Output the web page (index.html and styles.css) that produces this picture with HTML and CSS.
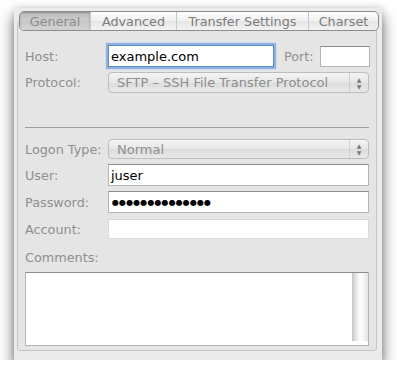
FILE: index.html
```html
<!DOCTYPE html>
<html>
<head>
  <meta charset="UTF-8">
  <title>Site Settings</title>
  <link rel="stylesheet" href="styles.css">
</head>
<body>
  <div class="window">
    <div class="tab-box">
      <div class="tabs">
        <div class="tab selected tab-general">General</div>
        <div class="tab tab-advanced">Advanced</div>
        <div class="tab tab-transfer">Transfer Settings</div>
        <div class="tab tab-charset">Charset</div>
      </div>

      <div class="row row-host">
        <div class="label">Host:</div>
        <div class="field focused host-field">example.com</div>
        <div class="port-label">Port:</div>
        <div class="field port-field"></div>
      </div>

      <div class="row row-protocol">
        <div class="label">Protocol:</div>
        <div class="popup">
          <span class="popup-text">SFTP – SSH File Transfer Protocol</span>
          <span class="popup-arrows"><span>▲</span><span>▼</span></span>
        </div>
      </div>

      <div class="separator"></div>

      <div class="row row-logon">
        <div class="label">Logon Type:</div>
        <div class="popup">
          <span class="popup-text">Normal</span>
          <span class="popup-arrows"><span>▲</span><span>▼</span></span>
        </div>
      </div>

      <div class="row row-input">
        <div class="label">User:</div>
        <div class="field">juser</div>
      </div>

      <div class="row row-input">
        <div class="label">Password:</div>
        <div class="field password">●●●●●●●●●●●●●●</div>
      </div>

      <div class="row row-account">
        <div class="label">Account:</div>
        <div class="field disabled"></div>
      </div>

      <div class="comments-label">Comments:</div>
      <div class="comments">
        <div class="comments-body"></div>
        <div class="scroll-track"></div>
      </div>
    </div>
  </div>
</body>
</html>
```

FILE: styles.css
```css
body {
  margin: 0;
  background-color: #fff;
  font-family: "DejaVu Sans", "Liberation Sans", sans-serif;
  font-size: 12.8px;
}

.window {
  margin: 8px 0 0 14px;
  width: 368px;
  padding: 13px 5px 9px 3px;
  box-sizing: border-box;
  background-color: #ebebeb;
  box-shadow: 0 8px 14px rgba(0, 0, 0, 0.6), 0 0 6px rgba(0, 0, 0, 0.12);
}

.tab-box {
  border: 1px solid #c4c4c4;
  border-radius: 3px;
  background-color: #e5e5e5;
  padding: 0 7px 4px 7px;
}

/* segmented tab control sitting on the box border */
.tabs {
  display: flex;
  height: 20px;
  margin: -11px -10px 0 -6px;
  border: 1px solid #8d8d8d;
  border-radius: 5px;
  box-sizing: border-box;
  overflow: hidden;
  background: linear-gradient(#fefefe, #f0f0f0 50%, #e6e6e6 51%, #f2f2f2);
}

.tab {
  display: flex;
  align-items: center;
  justify-content: center;
  color: #7c7c7c;
  border-left: 1px solid #c6c6c6;
  box-sizing: border-box;
}

.tab.selected {
  border-left: none;
  color: #8c8c8c;
  background: linear-gradient(#bcbcbc, #cdcdcd 50%, #c6c6c6 51%, #d4d4d4);
  box-shadow: inset 0 1px 2px rgba(0, 0, 0, 0.25);
}

.tab-general { width: 70px; }
.tab-advanced { width: 86px; }
.tab-transfer { width: 132px; }
.tab-charset { flex: 1; }

.row {
  display: flex;
  align-items: center;
}

.label {
  width: 83px;
  flex-shrink: 0;
  color: #8f8f8f;
}

.row-host {
  height: 22px;
  margin-top: 14px;
}

.row-protocol {
  height: 21px;
  margin-top: 5px;
}

.row-logon {
  height: 20px;
  margin-top: 11px;
}

.row-input {
  height: 22px;
  margin-top: 5px;
}

.row-account {
  height: 20px;
  margin-top: 6px;
}

.field {
  flex: 1;
  height: 100%;
  box-sizing: border-box;
  display: flex;
  align-items: center;
  padding: 0 2px;
  background-color: #fff;
  border: 1px solid #b4b4b4;
  border-top-color: #8c8c8c;
  color: #000;
  font-size: 13px;
}

.field.focused {
  border-color: #5f86c0;
  box-shadow: 0 0 1px 2px #8fb2e4;
}

.host-field {
  flex: none;
  width: 166px;
}

.port-label {
  color: #8f8f8f;
  margin: 0 6px 0 10px;
}

.port-field {
  flex: none;
  width: 50px;
  height: 21px;
}

.field.password {
  font-size: 8px;
  letter-spacing: 0.1px;
  padding-left: 3px;
}

.field.disabled {
  border-color: #dadada;
}

.popup {
  flex: 1;
  height: 100%;
  box-sizing: border-box;
  display: flex;
  align-items: center;
  border: 1px solid #bdbdbd;
  border-radius: 4px;
  background: linear-gradient(#f4f4f4, #e6e6e6 50%, #dcdcdc 51%, #e9e9e9);
  color: #8e8e8e;
  font-size: 13px;
}

.popup-text {
  flex: 1;
  padding-left: 8px;
}

.popup-arrows {
  width: 18px;
  height: 100%;
  border-left: 1px solid #cfcfcf;
  display: flex;
  flex-direction: column;
  align-items: center;
  justify-content: center;
  font-size: 6px;
  line-height: 7px;
  color: #7a7a7a;
}

.separator {
  height: 1px;
  margin-top: 34px;
  background-color: #9f9f9f;
}

.comments-label {
  margin-top: 11px;
  height: 15px;
  line-height: 15px;
  color: #8f8f8f;
}

.comments {
  display: flex;
  margin-top: 7px;
  height: 74px;
  box-sizing: border-box;
  border: 1px solid #b4b4b4;
  border-top-color: #8c8c8c;
  background-color: #fff;
}

.comments-body {
  flex: 1;
}

.scroll-track {
  width: 16px;
  margin-bottom: 4px;
  background: linear-gradient(to right, #c4c4c4, #e6e6e6 25%, #fdfdfd 50%, #f4f4f4 75%, #e4e4e4);
}
```
